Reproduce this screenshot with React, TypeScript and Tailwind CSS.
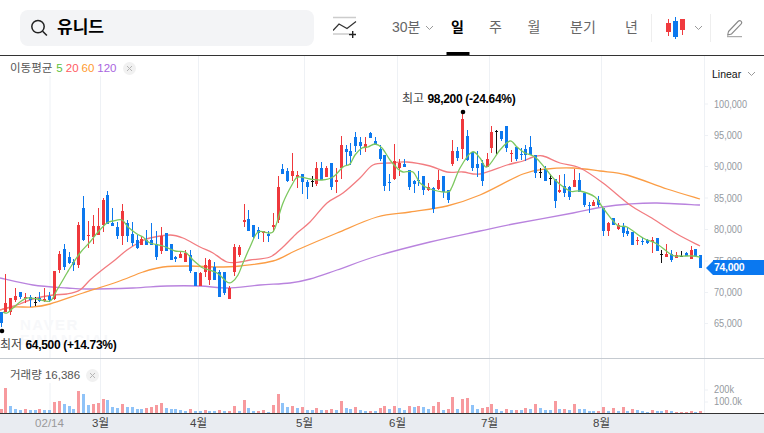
import React from "react";

const FONT = '"Liberation Sans","Noto Sans CJK KR",sans-serif';

// body top, body bottom, wick top, wick bottom, colour
const C: [number, number, number, number, "r" | "b" | "k"][] = [
  [312,323,312,327,"b"],[303,312,274,312,"r"],[298,312,298,315,"r"],[296,300,288,302,"r"],[292,297,292,299,"b"],
  [297,299,293,303,"r"],[297,300,295,307,"b"],[302,303,297,306,"k"],[298,301,292,302,"b"],[299,301,288,302,"r"],
  [296,300,292,302,"b"],[271,299,271,300,"r"],[254,270,251,273,"r"],[249,267,244,270,"b"],[257,263,252,264,"b"],
  [262,265,259,271,"b"],[225,265,222,268,"r"],[208,240,196,241,"b"],[235,236,221,248,"r"],[226,237,215,244,"r"],
  [226,235,208,235,"r"],[200,225,198,232,"r"],[195,224,191,224,"b"],[223,226,208,226,"b"],[227,236,222,239,"b"],
  [211,236,204,245,"r"],[223,236,220,242,"b"],[234,243,222,246,"b"],[240,248,235,249,"b"],[239,245,236,245,"r"],
  [240,245,230,245,"b"],[240,245,223,245,"b"],[244,257,231,260,"b"],[236,251,227,254,"r"],[233,251,233,251,"b"],
  [244,260,244,260,"b"],[257,259,256,262,"b"],[254,258,251,258,"r"],[253,262,250,262,"r"],[255,271,250,273,"b"],
  [272,286,272,286,"b"],[273,286,272,286,"r"],[265,272,258,277,"r"],[260,280,259,285,"r"],[267,280,262,280,"b"],
  [272,297,270,297,"b"],[272,293,272,295,"b"],[288,299,286,299,"r"],[247,272,244,276,"r"],[247,255,245,257,"r"],
  [220,222,204,227,"r"],[219,231,210,231,"b"],[225,237,225,239,"b"],[230,233,227,239,"b"],[231,233,231,242,"r"],
  [234,236,231,242,"b"],[225,227,213,232,"r"],[187,220,176,223,"r"],[169,174,164,174,"b"],[171,181,168,182,"b"],
  [171,176,153,181,"r"],[175,177,171,188,"r"],[174,182,174,194,"b"],[182,187,180,199,"b"],[181,182,176,187,"k"],
  [168,184,162,186,"r"],[168,180,162,180,"b"],[168,177,166,177,"r"],[163,187,163,190,"b"],[180,182,168,193,"r"],
  [145,168,136,179,"r"],[149,152,145,165,"b"],[151,156,143,165,"b"],[137,146,132,152,"b"],[142,146,137,155,"b"],
  [144,148,137,152,"r"],[133,138,132,138,"b"],[141,145,137,145,"b"],[149,159,145,161,"b"],[155,186,155,191,"b"],
  [182,183,174,191,"b"],[161,179,144,180,"r"],[163,168,159,176,"r"],[164,167,159,167,"b"],[170,187,170,190,"b"],
  [181,184,180,193,"b"],[180,181,171,186,"b"],[176,190,176,195,"b"],[187,190,183,191,"r"],[188,209,187,213,"b"],
  [180,189,170,190,"r"],[176,192,176,198,"b"],[190,200,190,203,"b"],[151,164,140,166,"r"],[151,158,147,161,"b"],
  [119,149,114,159,"r"],[136,160,130,161,"b"],[152,168,152,171,"b"],[164,168,151,177,"b"],[163,181,160,186,"b"],
  [159,167,153,167,"r"],[132,148,126,153,"r"],[131,132,130,154,"k"],[131,139,131,141,"b"],[126,148,126,152,"b"],
  [153,154,150,162,"r"],[147,159,147,161,"b"],[154,155,148,160,"b"],[149,155,145,161,"b"],[147,155,136,155,"b"],
  [155,173,155,178,"b"],[172,173,168,178,"k"],[169,181,166,181,"b"],[178,179,174,185,"k"],[179,201,179,208,"b"],
  [190,192,175,193,"r"],[186,193,174,197,"b"],[187,197,186,200,"b"],[180,187,169,187,"r"],[180,192,173,192,"b"],
  [193,205,193,207,"b"],[205,206,202,213,"b"],[202,206,200,206,"r"],[200,205,196,207,"b"],[208,231,208,236,"b"],
  [223,231,222,236,"r"],[218,225,218,225,"b"],[225,229,223,230,"r"],[227,233,223,237,"b"],[231,234,227,236,"b"],
  [232,245,232,245,"b"],[240,241,237,245,"r"],[241,242,237,245,"b"],[240,243,239,244,"b"],[240,242,237,253,"r"],
  [238,251,238,251,"b"],[254,255,250,263,"k"],[254,257,244,257,"r"],[254,260,250,262,"b"],[255,258,252,258,"r"],
  [256,257,251,257,"k"],[253,256,252,256,"b"],[250,259,246,259,"r"],[249,256,249,256,"b"],[255,268,255,268,"b"],
];

// positive = red, negative = blue
const V = [
  4,25,-7,-4,-3,4,-3,-3,4,-3,-3,11,12,-9,-7,-4,22,-19,-8,9,10,14,-13,-6,-5,9,-6,-6,-4,-4,5,6,8,10,-5,-4,-4,-3,-2,4,
  -2,-2,3,-2,-2,3,-2,2,7,-2,13,-5,-2,2,3,-1,8,19,-10,-6,7,-5,6,-3,-3,5,-3,3,4,-3,12,-5,-4,6,-3,-2,2,-2,5,7,-4,7,-5,-3,7,
  -6,7,-6,-4,7,11,-3,4,16,-4,14,15,-8,-4,5,6,9,-4,-2,4,-3,3,-3,5,-4,9,-5,-3,-3,12,-4,4,-3,9,-4,-4,-2,-2,2,6,-2,5,-2,6,-2,
  4,-3,-2,-1,3,-2,-2,3,-2,1,1,1,2,-1,2,
];

const MA5 = "3,312 7,313 13,308 20,302 27,298 37,299 50,301 57,290 67,273 70,268 80,253 90,242 98,232 107,223 113,221 122,220 128,227 137,234 143,237 150,243 163,246 175,251 185,252 193,260 200,266 203,268 217,273 227,282 232,282 238,275 243,263 250,247 258,232 270,233 275,228 283,203 293,183 298,177 310,179 322,180 333,177 343,167 350,164 355,155 362,148 368,147 375,144 382,148 390,160 397,168 403,172 413,172 420,183 430,189 447,192 452,187 460,168 472,152 480,158 487,167 500,150 510,141 517,147 525,153 535,157 545,168 555,180 570,191 580,191 595,197 603,208 617,225 627,227 643,238 657,244 672,255 680,256 693,256 700,257";
const MA20 = "0,310 10,307 20,304 33,299 53,295 67,294 80,290 90,280 102,270 115,260 127,250 140,242 150,238 170,235 183,238 200,247 213,253 227,262 240,262 250,260 270,257 283,247 297,233 310,222 327,203 343,193 360,178 373,165 390,163 407,162 430,166 447,172 463,172 480,174 507,165 523,161 533,157 543,156 560,163 580,168 603,183 630,205 650,217 677,234 700,246";
const MA60 = "0,310 13,307 33,307 50,304 83,293 117,282 143,272 163,267 190,266 217,267 240,266 273,261 297,250 337,233 377,217 410,212 447,206 480,195 523,174 547,169 573,168 600,171 627,175 667,189 700,199";
const MA120 = "0,278 33,285 67,288 87,289 133,288 167,286 200,286 227,288 260,285 290,283 310,279 337,270 377,256 430,242 480,231 513,224 573,213 603,207 630,204 657,203 700,205";

// Catmull-Rom through the sampled points, so the averages curve as in the picture
function smooth(s: string) {
  const p = s.split(" ").map((q) => q.split(",").map(Number));
  let d = `M${p[0][0]} ${p[0][1]}`;
  for (let i = 0; i < p.length - 1; i++) {
    const a = p[Math.max(i - 1, 0)], b = p[i], c = p[i + 1], e = p[Math.min(i + 2, p.length - 1)];
    d += `C${b[0] + (c[0] - a[0]) / 6} ${b[1] + (c[1] - a[1]) / 6} ${c[0] - (e[0] - b[0]) / 6} ${c[1] - (e[1] - b[1]) / 6} ${c[0]} ${c[1]}`;
  }
  return d;
}

const GRID = [50, 100.5, 198.5, 304.5, 397.5, 489.5, 601.5, 704.5];
const PRICES = [["100,000",104],["95,000",135.5],["90,000",166.5],["85,000",198],["80,000",229.5],["75,000",261],["70,000",292.5],["65,000",323.5]] as const;
const cx = (i: number) => Math.floor(1 + 4.86 * i);

function Chevron({ color = "#999" }: { color?: string }) {
  return (
    <svg width="9" height="6" viewBox="0 0 9 6" fill="none">
      <path d="M1 1l3.5 3.5L8 1" stroke={color} strokeWidth="1" />
    </svg>
  );
}

function CloseDot() {
  return (
    <span className="flex h-[13px] w-[13px] items-center justify-center rounded-full bg-[#f1f1f1]">
      <svg width="7" height="7" viewBox="0 0 7 7" fill="none">
        <path d="M1 1l5 5M6 1L1 6" stroke="#b5b5b5" strokeWidth="1" />
      </svg>
    </span>
  );
}

function Tab({ label, w, active }: { label: string; w: string; active?: boolean }) {
  return (
    <div className={`relative flex h-full items-center justify-center text-[14px] ${w} ${active ? "font-bold text-black" : "text-[#666]"}`}>
      {label}
      {active && <span className="absolute bottom-0 left-1/2 h-[3px] w-[23px] -translate-x-1/2 bg-black" />}
    </div>
  );
}

export default function App() {
  return (
    <div className="flex h-[433px] w-[764px] flex-col overflow-hidden bg-white" style={{ fontFamily: FONT }}>
      <header className="flex h-[56px] shrink-0 items-center border-b border-[#333] pl-[20px]">
        <div className="flex h-[36px] w-[294px] items-center rounded-lg bg-[#f3f4f6] pl-[10px]">
          <svg width="18" height="18" viewBox="0 0 18 18" fill="none">
            <circle cx="8" cy="7.6" r="6.2" stroke="#222" strokeWidth="1.5" />
            <path d="M12.6 12.2l4.3 4.3" stroke="#222" strokeWidth="1.6" />
          </svg>
          <span className="ml-[9px] text-[17px] font-bold text-black">유니드</span>
        </div>
        <svg className="ml-[19px]" width="24" height="24" viewBox="0 0 24 24" fill="none">
          <path d="M0 1.5h23M0 18h16" stroke="#ccc" strokeWidth="1.3" />
          <path d="M0 14.5L6 8l8 4.5L23 5.5" stroke="#333" strokeWidth="1.2" />
          <path d="M19.7 15v7M16 18.5h7" stroke="#222" strokeWidth="1.4" />
        </svg>
        <div className="ml-[35px] flex w-[46px] items-center text-[14px] text-[#666]">
          <span>30분</span>
          <span className="ml-[5px]"><Chevron /></span>
        </div>
        <div className="flex h-full items-stretch">
          <Tab label="일" w="w-[39px]" active />
          <Tab label="주" w="w-[37px]" />
          <Tab label="월" w="w-[40px]" />
          <Tab label="분기" w="w-[58px]" />
          <Tab label="년" w="w-[39px]" />
        </div>
        <span className="h-[28px] w-px bg-[#eee]" />
        <svg className="ml-[13px]" width="22" height="24" viewBox="0 0 22 24">
          <path d="M3.5 3v17M17.5 3v16" stroke="#f03a3e" strokeWidth="1" />
          <path d="M10.5 1v22" stroke="#0c78ee" strokeWidth="1" />
          <rect x="1" y="7" width="5" height="9" fill="#f03a3e" />
          <rect x="8" y="5" width="5" height="16" fill="#0c78ee" />
          <rect x="15" y="3" width="5" height="11" fill="#f03a3e" />
        </svg>
        <span className="ml-[7px]"><Chevron /></span>
        <span className="ml-[7px] h-[28px] w-px bg-[#eee]" />
        <svg className="ml-[15px]" width="18" height="20" viewBox="0 0 18 20" fill="none">
          <path d="M2.5 13.5L12 3.5c1-1 2-1.2 3-.3s.9 2 0 3L5.5 16l-3.8 1z" stroke="#888" strokeWidth="1.1" />
          <path d="M1 18.7h15" stroke="#999" strokeWidth="1" />
        </svg>
      </header>

      <section className="relative h-[303px] shrink-0 border-b border-[#c5cad0]">
        <svg className="block" width="764" height="302" viewBox="0 56 764 302">
          {GRID.map((x) => (
            <line key={x} x1={x} x2={x} y1={x === 50 || x === 100.5 ? 75 : 56} y2="358" stroke="#eef1f5" />
          ))}
          {PRICES.map(([, y]) => (
            <line key={y} x1="705" x2="708" y1={y} y2={y} stroke="#eef1f5" />
          ))}
          {PRICES.map(([t, y]) => (
            <text key={t} x="714" y={y + 3.5} fontSize="10.4" fill="#9499a0" textLength={t.length === 7 ? 33 : 28} lengthAdjust="spacingAndGlyphs">{t}</text>
          ))}
          <path d={smooth(MA120)} fill="none" stroke="#b983de" strokeWidth="1.3" />
          <path d={smooth(MA60)} fill="none" stroke="#fb9d45" strokeWidth="1.3" />
          <path d={smooth(MA20)} fill="none" stroke="#f27c80" strokeWidth="1.3" />
          {C.map(([bt, bb, wt, wb, c], i) => {
            const col = c === "r" ? "#ef383c" : c === "b" ? "#0c78ee" : "#111";
            const x = cx(i);
            return (
              <g key={i} shapeRendering="crispEdges">
                <rect x={x} y={wt} width="1" height={wb - wt} fill={col} />
                <rect x={x - 1} y={bt} width="3" height={bb - bt} fill={col} />
              </g>
            );
          })}
          <path d={smooth(MA5)} fill="none" stroke="#7cc85f" strokeWidth="1.3" />
          <circle cx="463" cy="112" r="2.3" fill="#000" />
          <circle cx="2" cy="331" r="2.3" fill="#000" />
          <text x="20" y="330" fontSize="15" fontWeight="700" fill="#f7f8fa" letterSpacing="1.5">NAVER</text>
          <text x="20" y="345" fontSize="15" fontWeight="700" fill="#f7f8fa" letterSpacing="1.5">FINANCIAL</text>
        </svg>

        <div className="absolute left-[10px] top-[5px] flex items-center bg-white pb-[1px] text-[11.5px] leading-[14px]">
          <span className="text-[#555]">이동평균</span>
          <span className="ml-[4px] text-[#5cbf3c]">5</span>
          <span className="ml-[3px] text-[#ff5a5f]">20</span>
          <span className="ml-[3px] text-[#ff9a2e]">60</span>
          <span className="ml-[3px] text-[#a965e0]">120</span>
          <span className="ml-[6px]"><CloseDot /></span>
        </div>
        <div className="absolute left-[712px] top-[11px] flex items-center text-[10.5px] leading-[14px] text-[#111]">
          Linear
          <span className="ml-[6px]"><Chevron /></span>
        </div>
        <div className="absolute left-[402px] top-[36px] whitespace-nowrap text-[12px] leading-[14px] text-black">
          <span className="text-[#444]">최고</span> <span className="font-bold tracking-[-0.3px]">98,200 (-24.64%)</span>
        </div>
        <div className="absolute left-0 top-[282px] whitespace-nowrap text-[12px] leading-[14px] text-black">
          <span className="text-[#444]">최저</span> <span className="font-bold tracking-[-0.3px]">64,500 (+14.73%)</span>
        </div>
        <div className="absolute left-[706px] top-[204px] flex h-[15px] w-[58px] items-center">
          <span className="h-0 w-0 border-y-[7.5px] border-r-[7px] border-y-transparent border-r-[#0a78f0]" />
          <span className="flex h-full flex-1 items-center bg-[#0a78f0] pl-px text-[10.5px] font-bold tracking-[-0.3px] text-white">74,000</span>
        </div>
      </section>

      <section className="relative h-[55px] shrink-0 border-b border-[#333]">
        <svg className="block" width="764" height="54" viewBox="0 359 764 54">
          {GRID.map((x) => (
            <line key={x} x1={x} x2={x} y1={x === 50 ? 383 : 359} y2="413" stroke="#eef1f5" />
          ))}
          <line x1="705" x2="708" y1="390" y2="390" stroke="#eef1f5" />
          <line x1="705" x2="708" y1="402" y2="402" stroke="#eef1f5" />
          {V.map((h, i) => (
            <rect key={i} shapeRendering="crispEdges" x={cx(i) - 1} y={413 - Math.abs(h)} width="3" height={Math.abs(h)} fill={h > 0 ? "#f79a9e" : "#8fc3f8"} />
          ))}
          <text x="714" y="393" fontSize="10.4" fill="#9499a0" textLength="20" lengthAdjust="spacingAndGlyphs">200k</text>
          <text x="714" y="405" fontSize="10.4" fill="#9499a0" textLength="28" lengthAdjust="spacingAndGlyphs">100.0k</text>
        </svg>
        <div className="absolute left-[10px] top-[9px] flex items-center bg-white text-[11.5px] leading-[14px] text-[#555]">
          거래량 16,386
          <span className="ml-[6px]"><CloseDot /></span>
        </div>
      </section>

      <footer className="relative h-[19px] shrink-0 bg-[#e9ecf1] text-[11.5px] text-[#444]">
        {[
          ["02/14", 49.5, "text-[#999]"],
          ["3월", 100.5, ""],
          ["4월", 198.5, ""],
          ["5월", 304.5, ""],
          ["6월", 397.5, ""],
          ["7월", 489.5, ""],
          ["8월", 601.5, ""],
        ].map(([t, x, c]) => (
          <span key={t as string} className={`absolute top-[2px] -translate-x-1/2 leading-[14px] ${c}`} style={{ left: x as number }}>{t}</span>
        ))}
      </footer>
    </div>
  );
}
